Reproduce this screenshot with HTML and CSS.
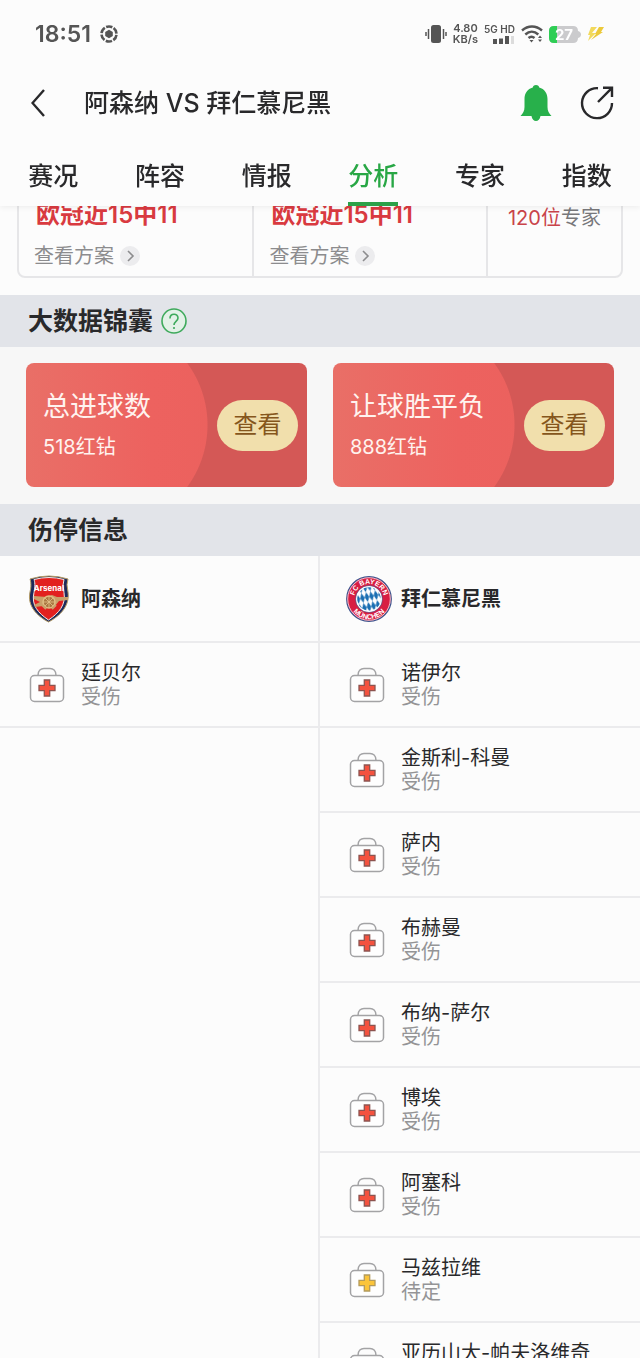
FILE: index.html
```html
<!DOCTYPE html>
<html lang="zh-CN">
<head>
<meta charset="utf-8">
<meta name="viewport" content="width=device-width, initial-scale=1">
<title>阿森纳 VS 拜仁慕尼黑</title>
<link rel="stylesheet" href="styles.css">
</head>
<body>
<svg class="defs" aria-hidden="true">
  <symbol id="kit" viewBox="0 0 46 46">
    <path d="M12 13.500c0-5 3-7 6-7h6c3 0 6 2 6 7" fill="none" stroke="#a3a3a5" stroke-width="1.5"/>
    <rect x="4.500" y="13.500" width="33" height="26" rx="4" fill="#fefefe" stroke="#a3a3a5" stroke-width="1.5"/>
    <path d="M18.300 18h5.400v5.300H29v5.400h-5.300V34h-5.400v-5.300H13v-5.400h5.300z" fill="#f4523f" stroke="#8d5450" stroke-width="1.300"/>
  </symbol>
  <symbol id="kit-doubt" viewBox="0 0 46 46">
    <path d="M12 13.500c0-5 3-7 6-7h6c3 0 6 2 6 7" fill="none" stroke="#a3a3a5" stroke-width="1.5"/>
    <rect x="4.500" y="13.500" width="33" height="26" rx="4" fill="#fefefe" stroke="#a3a3a5" stroke-width="1.5"/>
    <path d="M18.300 18h5.400v5.300H29v5.400h-5.300V34h-5.400v-5.300H13v-5.400h5.300z" fill="#fbc43a" stroke="#b39a5c" stroke-width="1.300"/>
  </symbol>
  <symbol id="go" viewBox="0 0 20 20">
    <circle cx="10" cy="10" r="10" fill="#ececee"/>
    <path d="M8 5l5 5-5 5" fill="none" stroke="#8c8c8e" stroke-width="1.6"/>
  </symbol>
</svg>
<div class="screen">
  <header class="top">
    <div class="status">
      <span class="clock">18:51</span>
      <svg class="ball" width="18" height="18" viewBox="0 0 18 18">
        <circle cx="9" cy="9" r="7.500" fill="none" stroke="#555" stroke-width="2.600" stroke-dasharray="6.350 1.500" stroke-dashoffset="-.8"/>
        <path d="M9 4.800l3.800 2.100v4.200L9 13.200l-3.800-2.100V6.900z" fill="#555"/>
      </svg>
      <div class="indicators">
        <svg width="22" height="20" viewBox="0 0 22 20">
          <rect x="6" y="1" width="10" height="18" rx="2.500" fill="#555"/>
          <path d="M3.500 5v10M1 8v4M18.500 5v10M21 8v4" stroke="#555" stroke-width="1.500"/>
        </svg>
        <div class="rate"><span>4.80</span><span>KB/s</span></div>
        <div class="network">
          <span>5G HD</span>
          <svg width="22" height="8" viewBox="0 0 22 8">
            <path d="M0 3h4v5H0zM6 2.500h4V8H6zM12 0h4v8h-4z" fill="#555"/>
            <path d="M18 0h3v8h-3z" fill="#dcdcdc"/>
          </svg>
        </div>
        <svg width="22" height="18" viewBox="0 0 22 18">
          <path d="M1 5.500C7 .2 15 .2 21 5.500M4.300 9.500c4-3.600 9-3.600 13 0M7.500 13c2-1.800 4-1.800 6 0" fill="none" stroke="#555" stroke-width="2.400"/>
          <path d="M8.500 15h4l-2 2.500zM17 13h4l-2-2.500zM17 14.500h4l-2 2.500z" fill="#555"/>
        </svg>
        <svg class="battery" width="32" height="17" viewBox="0 0 32 17">
          <path d="M5 0h19q5 0 5 5 3 1 3 3.500T29 12q0 5-5 5H5q-5 0-5-5V5q0-5 5-5z" fill="#cbcbcd"/>
          <path d="M8 0H5Q0 0 0 5v7q0 5 5 5h3z" fill="#2fce55"/>
          <text x="15" y="14" text-anchor="middle">27</text>
        </svg>
        <svg width="18" height="16" viewBox="0 0 18 16">
          <path d="M4 1h6L5 7h4L1 15l2-6H1z" fill="#f2d95c"/>
          <path d="M12 1h5l-3 5h2L4 14l5-6H8z" fill="#ecc93a"/>
        </svg>
      </div>
    </div>
    <div class="titlebar">
      <button class="icon-btn" aria-label="返回">
        <svg width="14" height="28" viewBox="0 0 14 28"><path d="M13 1L1.500 14 13 27" fill="none" stroke="#29292b" stroke-width="2.400"/></svg>
      </button>
      <h1>阿森纳 VS 拜仁慕尼黑</h1>
      <button class="icon-btn" aria-label="提醒">
        <svg width="32" height="36" viewBox="0 0 32 36"><path d="M16 0c2 0 3 1 3.200 2.600C24.500 4 27.500 8.500 27.500 14v8c0 4 1.500 6.500 4 9H20.500C20 34.500 18 36 16 36s-4-1.500-4.500-5H.5c2.500-2.500 4-5 4-9v-8c0-5.500 3-10 8.300-11.400C13 1 14 0 16 0z" fill="#28b04b"/></svg>
      </button>
      <button class="icon-btn" aria-label="分享">
        <svg width="34" height="34" viewBox="0 0 34 34"><path d="M18 2.200A15 15 0 1 0 32 17M23 1.800h9V11M32 1.800L18 16" fill="none" stroke="#29292b" stroke-width="2.400"/></svg>
      </button>
    </div>
    <nav class="tabs">
      <a href="#">赛况</a><a href="#">阵容</a><a href="#">情报</a><a href="#" class="active" aria-current="page">分析</a><a href="#">专家</a><a href="#">指数</a>
    </nav>
  </header>
  <main>
    <section class="experts">
      <div class="expert-card">
        <div class="plan"><strong>欧冠近15中11</strong><a href="#">查看方案<svg width="20" height="20"><use href="#go"/></svg></a></div>
        <div class="plan"><strong>欧冠近15中11</strong><a href="#">查看方案<svg width="20" height="20"><use href="#go"/></svg></a></div>
        <div class="more"><p><em>120位</em>专家</p></div>
      </div>
    </section>
    <div class="bar">
      <h2>大数据锦囊</h2>
      <button class="icon-btn" aria-label="说明">
        <svg width="26" height="26" viewBox="0 0 26 26"><g fill="none" stroke="#3faa5c" stroke-width="1.600"><circle cx="13" cy="13" r="12" fill="#e3f1e7"/><path d="M9 10.500c0-5.500 8-5.500 8-.5 0 3.400-4 3.500-4 7"/></g><circle cx="13" cy="20" r="1.100" fill="#3faa5c"/></svg>
      </button>
    </div>
    <section class="tips">
      <article class="tip"><div><h3>总进球数</h3><p>518红钻</p></div><button>查看</button></article>
      <article class="tip"><div><h3>让球胜平负</h3><p>888红钻</p></div><button>查看</button></article>
    </section>
    <div class="bar"><h2>伤停信息</h2></div>
    <section class="injuries">
      <div class="side">
        <div class="team">
          <svg width="46" height="48" viewBox="0 0 46 48">
            <path d="M4 4q19-6 38 0-2 5 0 13C44 31 34 41 22.500 47 11 41 1 31 4 17 6 9 4 4 4 4z" fill="#1d2a5b" stroke="#b39a63" stroke-width="1"/>
            <path d="M8 4.500q15-4 30 0-2 5 0 13C40 30 33 38 22.500 45 12 38 5 30 8 17.500 10 9 8 4.500 8 4.500z" fill="#e2201f" stroke="#f6e9e2" stroke-width="1"/>
            <text class="arsenal" x="23" y="15.500" text-anchor="middle">Arsenal</text>
            <path d="M8 21l13 1 5-2 5 2h11v3l-9 1-4 5H17l-8 1-1-2 6-3-6-3z" fill="#c9a069"/>
            <circle cx="23" cy="27" r="6" fill="#a97742" stroke="#dfbd83" stroke-width="1.500"/>
            <path d="M17 27h12M23 21v12M19 23l8 8M27 23l-8 8" stroke="#e5c48c" stroke-width=".8"/>
            <path d="M16 30l4 4M30 30l-4 4" stroke="#c9a069" stroke-width="2"/>
          </svg>
          <h3>阿森纳</h3>
        </div>
        <ul>
          <li><svg class="kit"><use href="#kit"/></svg><p>廷贝尔<span>受伤</span></p></li>
        </ul>
      </div>
      <div class="side">
        <div class="team">
          <svg width="46" height="46" viewBox="0 0 46 46">
            <defs>
              <pattern id="lozenge" width="4.600" height="10" patternUnits="userSpaceOnUse" patternTransform="rotate(-12)">
                <rect width="4.600" height="10" fill="#fff"/><path d="M2.300 0l2.300 5-2.300 5L0 5z" fill="#1b6fb3"/>
              </pattern>
              <path id="arc-top" d="M8 23a15 15 0 0 1 30 0"/>
              <path id="arc-bottom" d="M2.800 23a20.200 20.200 0 0 0 40.400 0"/>
            </defs>
            <circle cx="23" cy="23" r="22.300" fill="#d81e43" stroke="#3f568f" stroke-width="1.200"/>
            <circle cx="23" cy="23" r="21.300" fill="none" stroke="#fff" stroke-width=".7"/>
            <circle cx="23" cy="23" r="12.500" fill="url(#lozenge)" stroke="#fff" stroke-width="1.500"/>
            <circle cx="23" cy="23" r="13.500" fill="none" stroke="#3f568f" stroke-width=".6"/>
            <g class="bayern"><text text-anchor="middle"><textPath href="#arc-top" startOffset="50%">FC BAYERN</textPath></text><text text-anchor="middle"><textPath href="#arc-bottom" startOffset="50%">MÜNCHEN</textPath></text></g>
          </svg>
          <h3>拜仁慕尼黑</h3>
        </div>
        <ul>
          <li><svg class="kit"><use href="#kit"/></svg><p>诺伊尔<span>受伤</span></p></li>
          <li><svg class="kit"><use href="#kit"/></svg><p>金斯利-科曼<span>受伤</span></p></li>
          <li><svg class="kit"><use href="#kit"/></svg><p>萨内<span>受伤</span></p></li>
          <li><svg class="kit"><use href="#kit"/></svg><p>布赫曼<span>受伤</span></p></li>
          <li><svg class="kit"><use href="#kit"/></svg><p>布纳-萨尔<span>受伤</span></p></li>
          <li><svg class="kit"><use href="#kit"/></svg><p>博埃<span>受伤</span></p></li>
          <li><svg class="kit"><use href="#kit"/></svg><p>阿塞科<span>受伤</span></p></li>
          <li><svg class="kit"><use href="#kit-doubt"/></svg><p>马兹拉维<span>待定</span></p></li>
          <li><svg class="kit"><use href="#kit"/></svg><p>亚历山大-帕夫洛维奇<span>受伤</span></p></li>
        </ul>
      </div>
    </section>
  </main>
</div>
</body>
</html>
```
FILE: styles.css
```css
* { box-sizing: border-box; margin: 0; padding: 0; }
body {
  font-family: Inter, "Noto Sans CJK SC", sans-serif;
  font-size: 20px;
  line-height: 24px;
  color: #29292b;
  background: #fcfcfc;
}
a { color: inherit; text-decoration: none; }
button { font: inherit; color: inherit; border: 0; background: none; cursor: pointer; }
svg { display: block; flex: none; }
ul { list-style: none; }
em { font-style: normal; }
.defs { display: none; }
.screen { height: 100vh; overflow: hidden; }
.icon-btn { display: flex; flex: none; }

.top { position: sticky; top: 0; z-index: 1; background: #fcfcfc; box-shadow: 0 1px 6px rgba(0, 0, 0, .07); }
.status { display: flex; align-items: center; height: 68px; padding: 0 35px; color: #555; }
.clock { font-size: 23px; font-weight: 600; }
.ball { margin-left: 9px; }
.indicators { display: flex; align-items: center; gap: 6px; margin-left: auto; }
.rate, .network { display: flex; flex-direction: column; align-items: center; font-size: 11px; font-weight: 600; line-height: 10px; }
.rate { line-height: 11px; }
.network { align-items: flex-end; gap: 2px; font-size: 10px; }
.battery text { font-size: 15px; font-weight: 700; fill: #fff; }
.titlebar { display: flex; align-items: center; gap: 28px; height: 70px; padding: 0 26px 0 31px; }
.titlebar h1 { flex: 1; margin-left: 11px; font-size: 25px; font-weight: 500; line-height: 32px; }
.tabs { display: grid; grid-template-columns: repeat(6, 1fr); justify-items: center; }
.tabs a { height: 68px; padding-top: 22px; font-size: 25px; font-weight: 500; line-height: 32px; border-bottom: 4px solid transparent; }
.tabs .active { color: #28a745; border-color: #2ba148; }

.experts { display: flex; align-items: flex-end; height: 89px; padding: 0 17px 17px; overflow: hidden; }
.expert-card { display: grid; grid-template-columns: 235fr 235fr 136fr; width: 100%; height: 160px; border: 2px solid #e6e6e8; border-radius: 8px; }
.plan, .more { display: flex; flex-direction: column; justify-content: flex-end; padding: 0 15px 8px; }
.plan + .plan, .more { border-left: 2px solid #e6e6e8; }
.plan { gap: 15px; }
.plan strong { padding-left: 2px; font-size: 24px; font-weight: 600; line-height: 28px; color: #d93a40; }
.plan a { display: flex; align-items: center; gap: 6px; color: #8c8c8e; }
.more { align-items: center; padding-bottom: 46px; color: #77777a; }
.more em { color: #c9444a; }

.bar { display: flex; align-items: center; gap: 8px; height: 52px; padding: 0 28px; background: #e2e4e9; }
.bar h2 { font-size: 25px; font-weight: 700; line-height: 32px; }
.tips { display: grid; grid-template-columns: 1fr 1fr; gap: 26px; padding: 16px 26px 17px; background: #f7f7f7; }
.tip {
  display: flex; align-items: center; justify-content: space-between;
  height: 124px; padding: 0 9px 0 17px; border-radius: 8px; color: #fff3ef;
  background: radial-gradient(circle at 77px 50%, transparent 104px, #d45856 105px), linear-gradient(90deg, #e96f67, #ed625f 45%, #e9605c);
}
.tip h3 { font-size: 27px; font-weight: 400; line-height: 36px; }
.tip p { margin-top: 8px; line-height: 28px; }
.tip button { width: 81px; height: 51px; border-radius: 26px; font-size: 24px; color: #85561c; background: #f1dfac; }

.injuries { display: grid; grid-template-columns: 1fr 1fr; }
.side + .side { margin-left: -2px; border-left: 2px solid #ebebed; }
.team, .side li { display: flex; align-items: center; gap: 9px; padding-left: 26px; border-bottom: 2px solid #ebebed; }
.team { height: 87px; }
.team h3 { font-size: 20px; font-weight: 700; }
.side li { height: 85px; }
.side li span { display: block; color: #949496; }
.kit { width: 46px; height: 46px; }
.arsenal { font-size: 8px; font-weight: 700; fill: #fff; }
.bayern { font-family: "Liberation Sans", sans-serif; font-size: 7px; font-weight: 700; fill: #fff; }
```
